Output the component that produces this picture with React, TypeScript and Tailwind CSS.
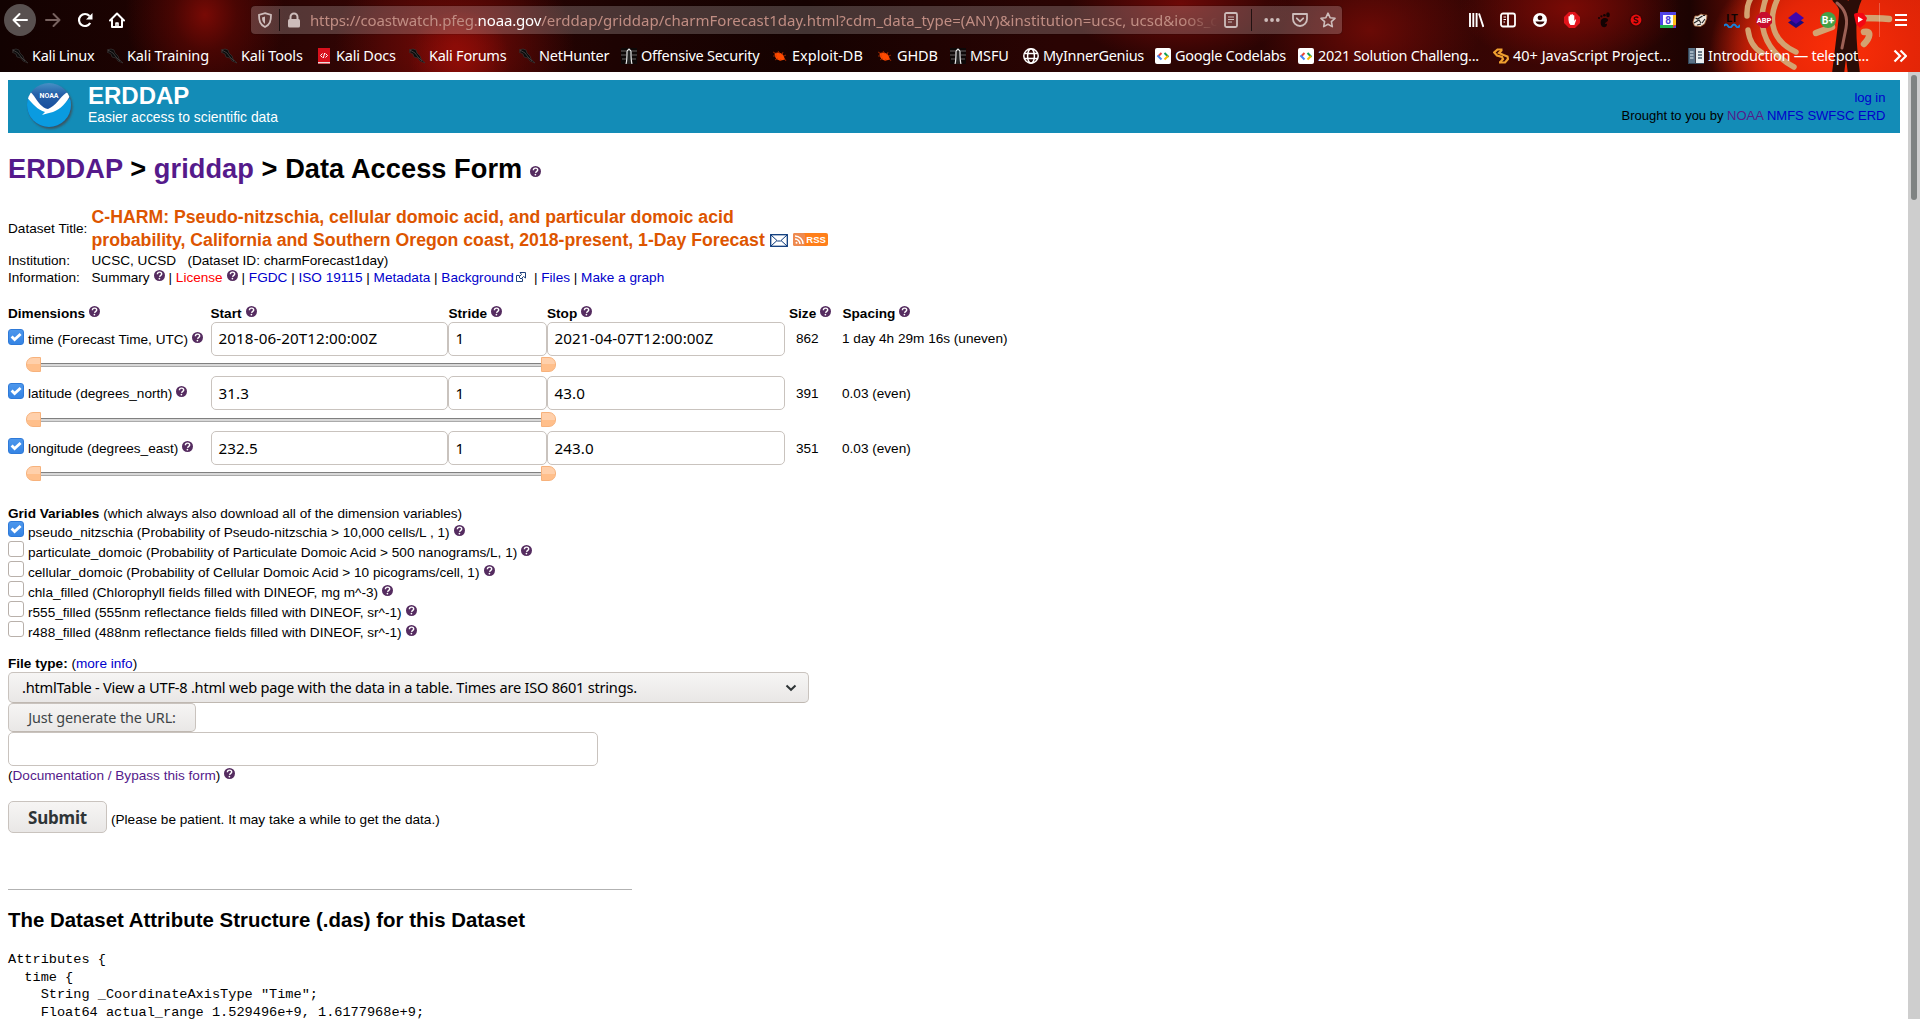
import React from "react";

const UI = "font-['Noto_Sans',sans-serif]";

function Help({ className = "" }: { className?: string }) {
  return (
    <svg viewBox="0 0 11 11" className={"ml-[0.3px] inline-block h-[11px] w-[11px] align-[1px] " + className}>
      <circle cx="5.5" cy="5.5" r="5.5" fill="#552c60" />
      <path d="M3.4 4.2C3.4 2.6 4.4 2.1 5.6 2.1S7.7 2.8 7.7 4C7.7 5.3 5.9 5.3 5.6 6.8" fill="none" stroke="#fff" strokeWidth="1.4" />
      <circle cx="5.4" cy="8.6" r=".85" fill="#fff" />
    </svg>
  );
}

function Check({ on }: { on?: boolean }) {
  return on ? (
    <span className="block h-4 w-4 shrink-0 rounded-[3px] border border-[#2f7ad8] bg-linear-to-b from-[#4d97ec] to-[#3584e4]">
      <svg viewBox="0 0 14 14" className="h-[14px] w-[14px]">
        <path d="M2.6 6.6l3 3 6-5.6" fill="none" stroke="#fff" strokeWidth="2.8" />
      </svg>
    </span>
  ) : (
    <span className="block h-4 w-4 shrink-0 rounded-[3px] border border-[#b9b1ab] bg-white" />
  );
}

const Dragon = () => (
  <svg viewBox="0 0 16 16" className="h-4 w-4">
    <path d="M0 2l4-1 3 1 1 3 3 3 1 3 4 4-5-2-2-3-4-1-1-3-4-2 2-1z" fill="#0b0b0b" stroke="#3a3535" strokeWidth=".7" />
    <path d="M1 2l5 3 3 4 4 4" stroke="#565050" strokeWidth=".7" fill="none" />
  </svg>
);
const Docs = () => (
  <svg viewBox="0 0 16 16" className="h-4 w-4">
    <rect x="2" y="0" width="12" height="16" fill="#d8101c" />
    <rect x="2" y="14" width="12" height="1.4" fill="#e8dede" />
    <path d="M6.500 5.500l-2 2 2 2M9.500 5.500l2 2-2 2M8.700 5l-1.400 5" stroke="#fff" strokeWidth="1" fill="none" />
  </svg>
);
const Tower = () => (
  <svg viewBox="0 0 16 16" className="h-4 w-4">
    <rect width="16" height="16" fill="#0d0808" />
    <path d="M0 3h5M0 7h5M1 11h4M11 3h5M11 7h5M11 11h4" stroke="#4a4444" strokeWidth="1.6" />
    <path d="M5 16c1-3 1-8 1-13l2-2 2 2c0 5 0 10 1 13" fill="#222" stroke="#e8e8e8" strokeWidth="1.200" />
  </svg>
);
const Bug = () => (
  <svg viewBox="0 0 16 16" className="h-4 w-4">
    <path d="M2.500 5.500c3-2 7-1 9 2l1.500 4-4 1c-4 0-6-2-6.500-7z" fill="#ff4a00" />
    <path d="M1 4l4 2M1 8l4 0M3 12l3-2M6 3l2 3M11 4l-1 3M12 8l2-1M12 10l2 3M8 13l1-2" stroke="#c83400" strokeWidth=".7" />
  </svg>
);
const Globe = () => (
  <svg viewBox="0 0 16 16" className="h-4 w-4" fill="none" stroke="#fff" strokeWidth="1.500">
    <circle cx="8" cy="8" r="7.200" />
    <ellipse cx="8" cy="8" rx="3.400" ry="7.200" />
    <path d="M1.500 5.500h13M1.500 10.500h13" />
  </svg>
);
const Codelab = () => (
  <svg viewBox="0 0 16 16" className="h-4 w-4" fill="none" strokeWidth="2">
    <rect width="16" height="16" rx="2" fill="#fff" />
    <path d="M6.500 5L3 8.500" stroke="#ea4335" />
    <path d="M2.500 7.500L6.500 11.500" stroke="#4285f4" />
    <path d="M9.500 5l4 4" stroke="#0f9d58" />
    <path d="M13 8L9.500 11.500" stroke="#fbbc04" />
  </svg>
);
const Swirl = () => (
  <svg viewBox="0 0 16 16" className="h-4 w-4" fill="none" stroke="#f0a030" strokeWidth="2.200">
    <path d="M9.500 1.500H4.500L1.200 4.500 4 7.500l5 1.500 1 2-3 3.500" />
    <path d="M9 2l-3 3 4.500 2 4 1.500.5 2.500-3 3.500H6" />
  </svg>
);
const Building = () => (
  <svg viewBox="0 0 16 16" className="h-4 w-4">
    <rect width="7.500" height="16" fill="#5b7186" />
    <rect x="8" width="8" height="16" fill="#e8edf0" />
    <path d="M2 4h3.500M2 7h3.500M2 10h3.500" stroke="#b8c6d2" strokeWidth="1.500" />
    <path d="M10 4h4M10 7h4M10 10h4" stroke="#44586a" strokeWidth="1.500" />
    <path d="M0 15.500h16M.5 0v16" stroke="#33475a" />
  </svg>
);

type Mark = { label: string; icon: React.FC; w: string; ls: string };
const marks: Mark[] = [
  { label: "Kali Linux", icon: Dragon, w: "w-[95px]", ls: "tracking-[-0.3px]" },
  { label: "Kali Training", icon: Dragon, w: "w-[114px]", ls: "tracking-[-0.15px]" },
  { label: "Kali Tools", icon: Dragon, w: "w-[95px]", ls: "tracking-[-0.2px]" },
  { label: "Kali Docs", icon: Docs, w: "w-[93px]", ls: "tracking-[-0.2px]" },
  { label: "Kali Forums", icon: Dragon, w: "w-[110px]", ls: "tracking-[-0.25px]" },
  { label: "NetHunter", icon: Dragon, w: "w-[102px]", ls: "tracking-[-0.25px]" },
  { label: "Offensive Security", icon: Tower, w: "w-[151px]", ls: "tracking-[-0.25px]" },
  { label: "Exploit-DB", icon: Bug, w: "w-[105px]", ls: "tracking-[0px]" },
  { label: "GHDB", icon: Bug, w: "w-[73px]", ls: "tracking-[-0.1px]" },
  { label: "MSFU", icon: Tower, w: "w-[73px]", ls: "tracking-[-0.1px]" },
  { label: "MyInnerGenius", icon: Globe, w: "w-[132px]", ls: "tracking-[-0.3px]" },
  { label: "Google Codelabs", icon: Codelab, w: "w-[143px]", ls: "tracking-[-0.3px]" },
  { label: "2021 Solution Challeng...", icon: Codelab, w: "w-[195px]", ls: "tracking-[-0.3px]" },
  { label: "40+ JavaScript Project...", icon: Swirl, w: "w-[195px]", ls: "tracking-[0px]" },
  { label: "Introduction — telepot...", icon: Building, w: "w-[206px]", ls: "tracking-[-0.25px]" },
];

const extensions: React.ReactNode[] = [
  <g stroke="#fff" strokeWidth="1.900"><path d="M2 1v14M5.300 1v14M8.600 1v14M11 1.500l4.400 13.500" /></g>,
  <g fill="none" stroke="#fff" strokeWidth="1.800"><rect x="1" y="1.500" width="14" height="13" rx="2" /><path d="M8 2v12" /><path d="M3.500 5h2.500M3.500 7.500h2.500M3.500 10h1.500" strokeWidth="1.200" /></g>,
  <g><circle cx="8" cy="8" r="7" fill="#fff" /><circle cx="8" cy="5.800" r="2.400" fill="#300504" /><path d="M3.500 9.500h9c-1 4-8 4-9 0z" fill="#300504" /></g>,
  <g><path d="M5 0h6l5 5v6l-5 5H5l-5-5V5z" fill="#e3131b" /><path d="M4.500 8V4.500q.6-.8 1.400 0V6V3q.7-.8 1.500 0v3V2.500q.7-.8 1.500 0V6V3.500q.7-.8 1.400 0V9l1-1.500q1.200-.3.8.6L10.400 13H6.500Q4.500 11 4.500 8z" fill="#fff" /></g>,
  <g fill="#120303"><path d="M5 8c2-3 7-2.500 7 0 0 2-3 2-3 4 1 0 2-.5 2 .3C11 15 8 16 6 14.500 4.500 13 4.500 10 5 8z" /><ellipse cx="12" cy="2.800" rx="1.800" ry="2.500" /><circle cx="8.400" cy="3.200" r="1.300" /><circle cx="5.400" cy="4.300" r="1.100" /><circle cx="3" cy="6" r="1" /></g>,
  <g><circle cx="8" cy="8" r="6.600" fill="#3a0404" /><circle cx="8" cy="8" r="5.400" fill="#e80d0d" /><path d="M10.300 5.800C9 4.500 6 5 6.200 6.600 6.500 8.300 10 7.600 9.900 9.400 9.700 11 7 11.200 5.700 9.800" fill="none" stroke="#3a0404" strokeWidth="1.400" /></g>,
  <g><rect width="16" height="16" fill="#5145e5" /><rect x="13" y="3" width="3" height="10" fill="#fcc21b" /><rect y="13" width="13" height="3" fill="#22b14c" /><path d="M13 13h3l-3 3z" fill="#e34133" /><rect x="3" y="3" width="10" height="10" fill="#fff" /><text x="8" y="11.500" fontSize="10" fontWeight="700" textAnchor="middle" fill="#4a3fd8" fontFamily="Roboto, sans-serif">8</text></g>,
  <g><path d="M1 10L3 4l3 0 3-2 3 1 3 0-.5 4-2 5-4 2.500-6-.5z" fill="#eee8e0" stroke="#a8683c" strokeWidth=".8" /><path d="M3.500 6l2 1 5-3M2 11l5-3 2 3M10 11l3-4M11 3.500l2 0M5 13l4-1" stroke="#222" strokeWidth="1.100" fill="none" /></g>,
  <g><text x="8" y="10" fontSize="11" fontWeight="700" textAnchor="middle" fill="#0c0404" fontFamily="Roboto, sans-serif">LT</text><path d="M0 14q2-3 4 0t4 0 4 0 4-1" fill="none" stroke="#1484dc" strokeWidth="2" /></g>,
  <g><path d="M5 0h6l5 5v6l-5 5H5l-5-5V5z" fill="#c70d2c" /><text x="8" y="10.800" fontSize="7.500" fontWeight="700" textAnchor="middle" fill="#fff" fontFamily="Roboto, sans-serif">ABP</text></g>,
  <g><path d="M8 5l8 5.500L8 16 0 10.500z" fill="#1c0a80" /><path d="M8 0l8 6-8 6-8-6z" fill="#4106ab" /></g>,
  <g><circle cx="8" cy="8" r="8" fill="#43a047" /><text x="8" y="12" fontSize="10.500" fontWeight="700" textAnchor="middle" fill="#fff" fontFamily="Roboto, sans-serif">B+</text></g>,
  <g><path d="M2 3q0-2 3-2h6l4 5-2 6-5 4-4-4z" fill="#f40612" /><path d="M6 4.500l5 3-5 3z" fill="#fff" /></g>,
];

function Chrome() {
  return (
    <header
      className={
        "relative h-[72px] w-full overflow-hidden bg-[#1a0302] text-white " + UI +
        " bg-[radial-gradient(ellipse_130px_100px_at_1840px_50px,#fb2e08_0%,#e62607_55%,#c01c0500_100%),radial-gradient(ellipse_50px_50px_at_460px_60px,#a00e08aa_0%,#7a0a0600_100%),radial-gradient(ellipse_120px_100px_at_455px_45px,#7a0a06_0%,#5a050500_100%),radial-gradient(ellipse_80px_90px_at_205px_15px,#780a05_0%,#6a080488_40%,#5a050300_100%),radial-gradient(ellipse_110px_60px_at_1180px_4px,#6d0907_0%,#6d090700_100%),radial-gradient(ellipse_110px_80px_at_1370px_30px,#6a0a06_0%,#6a0a0600_100%),radial-gradient(ellipse_110px_60px_at_1570px_8px,#7a0a05_0%,#7a0a0500_100%),linear-gradient(90deg,#120201_0%,#240302_12%,#330504_20%,#1d0302_32%,#150201_42%,#2a0403_55%,#2c0403_70%,#3d0604_82%,#1c0302_88%,#4a0803_90%,#b81a05_93%,#d92406_100%)]"
      }
    >
      <svg viewBox="0 0 240 72" className="absolute top-0 right-0 h-[72px] w-[240px]" fill="none" strokeLinecap="round">
        <path d="M71-2C66 6 67 12 67 16M68 30q2 16 14 23M86-2C78 20 80 48 114 67M98-2C86 22 94 42 116 52" stroke="#d3a271" strokeWidth="5.500" />
        <path d="M136 33l16-6M176 18c14 0 22 0 33 1M184 32c8-2 6 6 0 12" stroke="#d3a271" strokeWidth="6.500" />
        <path d="M158-2c8 8 8 10 6 26l-6 50M176-2c-6 12-8 30-2 76" stroke="#2a0d08" strokeWidth="12" />
        <path d="M157 3c8 6 11 14 9 25l-4 20" stroke="#9c6055" strokeWidth="3" />
      </svg>
      <div className="relative flex h-[40px] items-start">
        <div className="mt-1 ml-1 flex h-8 w-8 items-center justify-center rounded-full bg-[#58504f]">
          <svg viewBox="0 0 16 16" className="h-4 w-4" fill="none" stroke="#fff" strokeWidth="2" strokeLinecap="round" strokeLinejoin="round"><path d="M15 8H1.500M7.500 2L1.500 8l6 6" /></svg>
        </div>
        <svg viewBox="0 0 16 16" className="mt-3 ml-[9px] h-4 w-4" fill="none" stroke="#77625f" strokeWidth="2" strokeLinecap="round" strokeLinejoin="round"><path d="M1 8h13.500M8.500 2l6 6-6 6" /></svg>
        <svg viewBox="0 0 16 16" className="mt-3 ml-4 h-4 w-4" fill="none" stroke="#fff" strokeWidth="2.200"><path d="M13.200 11A6 6 0 1 1 12.500 4" /><path d="M15.500 1v6.500H9z" fill="#fff" stroke="none" /></svg>
        <svg viewBox="0 0 16 16" className="mt-3 ml-4 h-4 w-4" fill="none" stroke="#fff" strokeWidth="2" strokeLinejoin="round"><path d="M1 8.500L8 1.500l7 7M3 8v7h10V8" strokeLinecap="round" /><path d="M7 15v-4h2v4" strokeWidth="1.600" /></svg>
        <div className="mt-[6px] ml-[126px] flex h-7 w-[1091px] items-center rounded-[4px] bg-[#ffffff33] shadow-[0_0_1px_#000]">
          <svg viewBox="0 0 16 16" className="ml-[6px] h-4 w-4" fill="none" stroke="#cdbcba" strokeWidth="1.800"><path d="M8 1.200L14 3c0 6-1 9.500-6 12C3 12.500 2 9 2 3z" /><path d="M8 4.500v7.500C5.500 10 5 8 5 5.400z" fill="#cdbcba" stroke="none" /></svg>
          <span className="ml-[6px] h-[22px] w-px bg-[#000000aa]" />
          <svg viewBox="0 0 16 16" className="ml-[6px] h-4 w-4"><path d="M4.500 8V5a3.500 3.500 0 0 1 7 0v3" fill="none" stroke="#cdbcba" strokeWidth="2" /><rect x="2" y="7" width="12" height="8.500" rx="1.500" fill="#cdbcba" /></svg>
          <span className="ml-[8px] w-[908px] text-[15px] leading-7 whitespace-nowrap text-[#c08d83] [mask-image:linear-gradient(90deg,#000_96%,transparent)]">
            <span className="tracking-[-0.15px]">https://coastwatch.pfeg.</span><span className="tracking-[-0.15px] text-white">noaa.gov</span><span className="tracking-[0.03px]">/erddap/griddap/charmForecast1day.html?cdm_data_type=(ANY)&amp;institution=ucsc, ucsd&amp;ioos_c</span>
          </span>
          <svg viewBox="0 0 16 16" className="ml-[5px] h-4 w-4" fill="none" stroke="#cdbcba"><rect x="2" y="1" width="12" height="14" rx="1.500" strokeWidth="1.800" /><path d="M5 5h6M5 7.500h6M5 10h4" strokeWidth="1.200" /></svg>
          <span className="ml-[12px] h-[22px] w-px bg-[#000000aa]" />
          <svg viewBox="0 0 16 16" className="ml-[12px] h-4 w-4" fill="#cdbcba"><circle cx="2.200" cy="8" r="1.900" /><circle cx="8" cy="8" r="1.900" /><circle cx="13.800" cy="8" r="1.900" /></svg>
          <svg viewBox="0 0 16 16" className="ml-[12px] h-4 w-4" fill="none" stroke="#cdbcba" strokeWidth="1.800" strokeLinecap="round" strokeLinejoin="round"><path d="M1 2h14v5a7 7 0 0 1-14 0z" /><path d="M4.800 6.300L8 9.300l3.200-3" /></svg>
          <svg viewBox="0 0 16 16" className="ml-[12px] h-4 w-4" fill="none" stroke="#cdbcba" strokeWidth="1.600" strokeLinejoin="round"><path d="M8 1.200l2.100 4.500 4.900.6-3.600 3.400.9 4.900L8 12.200l-4.300 2.400.9-4.900L1 6.300l4.900-.6z" /></svg>
        </div>
        <div className="ml-[118px] flex h-[40px] items-center">
          {extensions.map((g, i) => (
            <svg key={i} viewBox="0 0 16 16" className="mx-2 h-4 w-4">{g}</svg>
          ))}
        </div>
        <span className="mt-[3px] ml-[3px] h-[34px] w-px bg-[#ffffff40]" />
        <svg viewBox="0 0 12 14" className="mt-[13px] ml-[15px] h-[14px] w-3" stroke="#fff" strokeWidth="2"><path d="M0 2h12M0 7h12M0 12h12" /></svg>
      </div>
      <div className="relative flex h-8 items-center pl-3">
        {marks.map(({ label, icon: Icon, w, ls }) => (
          <div key={label} className={"flex shrink-0 items-center gap-1 text-[14.5px] leading-8 whitespace-nowrap " + w + " " + ls}>
            <Icon />
            <span className="-mt-[2px]">{label}</span>
          </div>
        ))}
        <svg viewBox="0 0 14 14" className="-ml-px h-[14px] w-[14px] shrink-0" fill="none" stroke="#fff" strokeWidth="2.200"><path d="M1.500 1.500L7 7l-5.500 5.500M7.500 1.500L13 7l-5.500 5.500" /></svg>
      </div>
    </header>
  );
}

function Link({ children, visited }: { children: React.ReactNode; visited?: boolean }) {
  return <a className={visited ? "text-[#551a8b]" : "text-[#0000cc]"}>{children}</a>;
}

function Banner() {
  return (
    <div className="flex h-[53px] w-[1892px] bg-[#138cb7]">
      <svg viewBox="0 0 50 50" className="mt-[2px] ml-[17px] h-[50px] w-[50px]">
        <defs>
          <clipPath id="disc"><circle cx="24" cy="23" r="22" /></clipPath>
          <filter id="shade" x="-20%" y="-20%" width="150%" height="150%"><feGaussianBlur stdDeviation="1.200" /></filter>
          <linearGradient id="sky" x1="0" y1="0" x2="0" y2="1"><stop offset="0" stopColor="#4a95c8" /><stop offset=".25" stopColor="#2560a8" /><stop offset=".6" stopColor="#164a9a" /></linearGradient>
        </defs>
        <circle cx="25.500" cy="25" r="22" fill="#3b5560" filter="url(#shade)" />
        <g clipPath="url(#disc)">
          <rect width="50" height="50" fill="url(#sky)" />
          <path d="M0 13C8 20 12 27 22 29 34 28 40 20 50 12V50H0z" fill="#0a9be0" />
          <path d="M0 11C4 8 7 11 9 14C13 20 17 26 23 27C31 24 35 15 41 11L47 9C43 20 36 27 28 30C24 31 20 32 17 33L20 30C12 28 6 20 0 13z" fill="#fff" />
        </g>
        <text x="24" y="15.500" fontSize="7" fontWeight="700" textAnchor="middle" fill="#fff" fontFamily="Roboto, sans-serif">NOAA</text>
      </svg>
      <div className="ml-[13px] grow text-white">
        <div className="mt-[2px] text-[24px] leading-[28px] font-bold">ERDDAP</div>
        <div className="-mt-px text-[13.900px] leading-4">Easier access to scientific data</div>
      </div>
      <div className="pt-[9px] pr-[14.500px] text-right text-[13.030px] leading-[18px]">
        <div><Link>log in</Link></div>
        <div>Brought to you by <Link visited>NOAA</Link> <Link>NMFS</Link> <Link>SWFSC</Link> <Link>ERD</Link></div>
      </div>
    </div>
  );
}

function Box({ w, lead = "leading-[32px]", children }: { w: string; lead?: string; children?: React.ReactNode }) {
  return (
    <div className={"h-[34px] shrink-0 rounded-[5px] border border-[#c9c3be] bg-white pl-[6.500px] text-[15.200px] tracking-[0.100px] text-black " + UI + " " + w + " " + lead}>
      {children}
    </div>
  );
}

function Slider() {
  return (
    <div className="ml-[18px] flex h-[15px] w-[530px] items-center">
      <span className="h-[15px] w-[15px] rounded-l-[7px] border border-[#f7b27c] bg-linear-to-b from-[#ffd0ab] from-50% to-[#ffbf8b] to-50%" />
      <span className="h-[4px] grow border-t border-b border-t-[#808080] border-b-[#aaaaaa] bg-[#d8d8d8]" />
      <span className="h-[15px] w-[15px] rounded-r-[7px] border border-[#f7b27c] bg-linear-to-b from-[#ffd0ab] from-50% to-[#ffbf8b] to-50%" />
    </div>
  );
}

const dims = [
  { name: "time (Forecast Time, UTC)", start: "2018-06-20T12:00:00Z", stop: "2021-04-07T12:00:00Z", size: "862", spacing: "1 day 4h 29m 16s (uneven)", h: "h-[54px]", top: "h-[35px]", lead: "leading-[31px]", side: "pt-[9px]" },
  { name: "latitude (degrees_north)", start: "31.3", stop: "43.0", size: "391", spacing: "0.03 (even)", h: "h-[55px]", top: "h-[36px]", lead: "leading-[32px]", side: "pt-[10px]" },
  { name: "longitude (degrees_east)", start: "232.5", stop: "243.0", size: "351", spacing: "0.03 (even)", h: "h-[55px]", top: "h-[35px]", lead: "leading-[32px]", side: "pt-[10px]" },
];

const variables = [
  "pseudo_nitzschia (Probability of Pseudo-nitzschia > 10,000 cells/L , 1)",
  "particulate_domoic (Probability of Particulate Domoic Acid > 500 nanograms/L, 1)",
  "cellular_domoic (Probability of Cellular Domoic Acid > 10 picograms/cell, 1)",
  "chla_filled (Chlorophyll fields filled with DINEOF, mg m^-3)",
  "r555_filled (555nm reflectance fields filled with DINEOF, sr^-1)",
  "r488_filled (488nm reflectance fields filled with DINEOF, sr^-1)",
];

function Info() {
  return (
    <div className="mt-[21px]">
      <div className="flex h-[46px] items-center">
        <span className="w-[83.500px]">Dataset Title:</span>
        <div className="text-[17.680px] leading-[23px] font-bold whitespace-nowrap text-[#dd5500]">
          C-HARM: Pseudo-nitzschia, cellular domoic acid, and particular domoic acid
          <div className="flex items-center">
            probability, California and Southern Oregon coast, 2018-present, 1-Day Forecast
            <svg viewBox="0 0 18 13" className="-mt-px ml-[5px] h-[13px] w-[18px]" fill="#fff" stroke="#0c3a7c"><rect x=".7" y=".7" width="16.600" height="11.600" strokeWidth="1.300" /><path d="M1 1l6.500 6h3L17 1M1 12l6-5.500M17 12l-6-5.500" fill="none" /></svg>
            <span className="-mt-[3px] ml-[5px] flex h-[13px] w-[35px] items-center rounded-[2px] bg-[#ff7f1a] text-[9.500px] leading-[13px] text-white">
              <svg viewBox="0 0 12 13" className="h-[13px] w-3" fill="none" stroke="#fff" strokeWidth="1.500"><rect width="12" height="13" rx="2" fill="#ee8a50" stroke="none" /><circle cx="3.500" cy="9.800" r="1" fill="#fff" stroke="none" /><path d="M2 6a5 5 0 0 1 5 5M2 3a8 8 0 0 1 8 8" /></svg>
              <span className="ml-[1.500px]">RSS</span>
            </span>
          </div>
        </div>
      </div>
      <div className="flex h-[17px] leading-[17px]">
        <span className="w-[83.500px]">Institution:</span>
        <span className="whitespace-pre">{"UCSC, UCSD   (Dataset ID: charmForecast1day)"}</span>
      </div>
      <div className="flex h-[17px] leading-[17px]">
        <span className="w-[83.500px]">Information:</span>
        <span className="whitespace-pre">
          Summary <Help /> | <a className="text-[#ff0000]">License</a> <Help /> | <Link>FGDC</Link> | <Link>ISO 19115</Link> | <Link>Metadata</Link> | <Link>Background</Link>
          <svg viewBox="0 0 10 10" className="ml-[2.500px] inline-block h-[10px] w-[10px] align-baseline" fill="#fff" stroke="#1c3f7c"><path d="M3.500 3.500h-3v6h6v-3M4 .5h5.500V6L7.500 4.500 5 7 3 5l2.500-2.500z" /></svg>
          {"  | "}<Link>Files</Link> | <Link>Make a graph</Link>
        </span>
      </div>
    </div>
  );
}

function Dimensions() {
  return (
    <div className="mt-[19px]">
      <div className="flex h-[17px] leading-[17px] font-bold">
        <span className="w-[202.500px]">Dimensions <Help /></span>
        <span className="w-[238px]">Start <Help /></span>
        <span className="w-[98.500px]">Stride <Help /></span>
        <span className="w-[242px]">Stop <Help /></span>
        <span className="w-[53.500px]">Size <Help /></span>
        <span>Spacing <Help /></span>
      </div>
      {dims.map((d) => (
        <div key={d.name} className={d.h}>
          <div className={"flex items-start " + d.top}>
            <div className="flex w-[203px] shrink-0 pt-[7px]">
              <Check on />
              <span className="ml-1 pt-[3px] leading-4 whitespace-nowrap">{d.name} <Help /></span>
            </div>
            <Box w="w-[237px]" lead={d.lead}>{d.start}</Box>
            <Box w="w-[99px]" lead={d.lead}>1</Box>
            <Box w="w-[238px]" lead={d.lead}>{d.stop}</Box>
            <span className={"ml-[11px] w-[46px] leading-4 " + d.side}>{d.size}</span>
            <span className={"leading-4 " + d.side}>{d.spacing}</span>
          </div>
          <Slider />
        </div>
      ))}
    </div>
  );
}

function Page() {
  return (
    <main className="h-[947px] w-[1908px] overflow-hidden bg-white pt-2 pl-2 font-['Liberation_Sans',Arial,sans-serif] text-[13.600px] text-black">
      <Banner />
      <h1 className="mt-[20px] h-[32px] text-[27.200px] leading-8 font-bold tracking-[0.060px]">
        <Link visited>ERDDAP</Link> &gt; <Link visited>griddap</Link> &gt; Data Access Form <Help />
      </h1>
      <Info />
      <Dimensions />
      <div className="mt-[19px] h-4 leading-[17px]"><b>Grid Variables</b> (which always also download all of the dimension variables)</div>
      {variables.map((v, i) => (
        <div key={v} className="flex h-5">
          <Check on={i === 0} />
          <span className="ml-1 pt-1 leading-4">{v} <Help /></span>
        </div>
      ))}
      <div className="mt-[14px] h-[17px] leading-[17px]"><b>File type:</b> (<Link>more info</Link>)</div>
      <div className={"flex h-[31px] w-[801px] items-center justify-between rounded-[5px] border border-[#c9c3be] border-b-[#bfb8b1] bg-linear-to-b from-[#f6f5f4] to-[#e9e7e6] pr-[11px] pl-[13px] text-[14.600px] tracking-[-0.230px] " + UI}>
        <span>.htmlTable - View a UTF-8 .html web page with the data in a table. Times are ISO 8601 strings.</span>
        <svg viewBox="0 0 12 8" className="h-2 w-3" fill="none" stroke="#2e3436" strokeWidth="2"><path d="M1.500 1.500L6 5.800l4.500-4.300" /></svg>
      </div>
      <button className={"block h-[29px] w-[188px] rounded-[5px] border border-[#c9c3be] border-b-[#bfb8b1] bg-linear-to-b from-[#f6f5f4] to-[#e9e7e6] text-[14.400px] leading-[26px] tracking-[-0.120px] text-[#3d4447] " + UI}>Just generate the URL:</button>
      <Box w="w-[590px]" />
      <div className="mt-[1px] h-[17px] leading-[17px]">(<Link visited>Documentation / Bypass this form</Link>) <Help /></div>
      <div className="mt-[17px] flex h-8">
        <button className={"h-8 w-[99px] rounded-[5px] border border-[#c9c3be] bg-linear-to-b from-[#f6f5f4] to-[#e9e7e6] text-[17px] leading-[31px] font-bold tracking-[-0.200px] text-[#2e3436] " + UI}>Submit</button>
        <span className="ml-1 pt-[11px] leading-4">(Please be patient. It may take a while to get the data.)</span>
      </div>
      <div className="mt-[56px] h-px w-[624px] bg-[#b2b2b2]" />
      <h2 className="mt-[18px] h-6 text-[20.400px] leading-6 font-bold tracking-[0.020px]">The Dataset Attribute Structure (.das) for this Dataset</h2>
      <pre className="mt-[19px] font-['Liberation_Mono',monospace] text-[13.600px] leading-[17.600px]">
        {'Attributes {\n  time {\n    String _CoordinateAxisType "Time";\n    Float64 actual_range 1.529496e+9, 1.6177968e+9;'}
      </pre>
    </main>
  );
}

export default function App() {
  return (
    <div className="h-[1019px] w-[1920px] overflow-hidden bg-white">
      <Chrome />
      <div className="flex">
        <Page />
        <div className="h-[947px] w-3 bg-[#cecece] pt-[3px] pl-[3px]">
          <div className="h-[125px] w-[6px] rounded-full bg-[#7f8382]" />
        </div>
      </div>
    </div>
  );
}
